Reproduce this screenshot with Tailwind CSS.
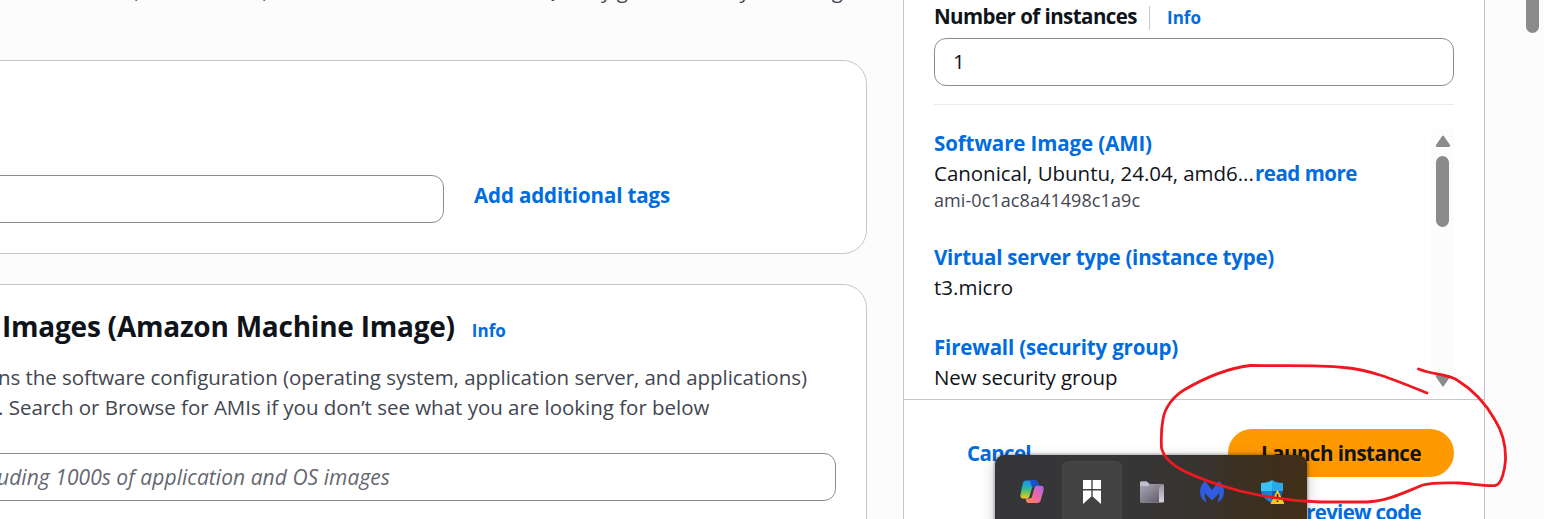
<!DOCTYPE html>
<html lang="en">
<head>
<meta charset="utf-8">
<title>Launch an instance</title>
<script src="https://cdn.jsdelivr.net/npm/@tailwindcss/browser@4"></script>
</head>
<body class="relative flex h-[519px] w-[1544px] overflow-hidden bg-[#fcfcfd] font-['Open_Sans','Noto_Sans',sans-serif] text-[20.5px] leading-[30px] text-[#0f141a]">

<!-- Main column -->
<main class="flex h-full w-[867px] shrink-0 flex-col overflow-hidden">
  <div class="flex h-[60px] shrink-0 items-start justify-end pr-[24px]">
    <p class="-mt-[25px] shrink-0 whitespace-nowrap tracking-[0.11px] text-[#424650]">Amazon EC2 allows you to create virtual machines, or instances, that run on the AWS Cloud. Quickly get started by following</p>
  </div>

  <section class="-ml-8 flex h-[194px] shrink-0 items-start rounded-[24px] border border-[#c6c6cd] bg-white pt-[114px]">
    <div class="h-12 w-[475px] rounded-[12px] border border-[#8c8c94] bg-white"></div>
    <a class="ml-[30px] mt-[5px] font-bold tracking-[-0.12px] text-[#006ce0]">Add additional tags</a>
  </section>

  <section class="-ml-8 mt-[30px] h-[300px] shrink-0 rounded-t-[24px] border border-[#c6c6cd] bg-white pl-8 pt-[23px]">
    <div class="flex h-9 items-baseline">
      <h2 class="whitespace-nowrap pl-px text-[28px] font-bold leading-9 tracking-[-0.23px]">Images (Amazon Machine Image)</h2>
      <a class="ml-[17px] text-[17px] font-bold leading-6 text-[#006ce0]">Info</a>
    </div>
    <p class="-ml-[3px] mt-[18px] whitespace-nowrap tracking-[-0.04px] text-[#424650]">ns the software configuration (operating system, application server, and applications)</p>
    <p class="-ml-[3px] whitespace-nowrap tracking-[-0.02px] text-[#424650]">. Search or Browse for AMIs if you don’t see what you are looking for below</p>
    <div class="-ml-8 mt-[31px] flex h-12 w-[867px] items-center rounded-[12px] border border-[#8c8c94] pl-[27px]">
      <span class="whitespace-nowrap text-[21px] italic tracking-[0.05px] text-[#656871]">uding 1000s of application and OS images</span>
    </div>
  </section>
</main>

<!-- Summary panel -->
<aside class="ml-9 flex h-full w-[582px] shrink-0 flex-col border-x border-[#c6c6cd] bg-white">
  <div class="flex h-[399px] shrink-0 flex-col px-[30px] pt-[2px]">
    <div class="flex h-[31px] items-center">
      <span class="w-[203px] whitespace-nowrap pb-[3px] font-bold tracking-[-0.55px]">Number of instances</span>
      <span class="ml-3 h-6 w-px bg-[#c6c6cd]"></span>
      <a class="ml-[17px] text-[17px] font-bold text-[#006ce0]">Info</a>
    </div>
    <div class="mt-[5px] flex h-12 shrink-0 items-center rounded-[12px] border border-[#8c8c94] pb-[2px] pl-[18px]">1</div>
    <div class="mt-[18px] h-px shrink-0 bg-[#ebebf0]"></div>
    <div class="flex flex-1 justify-between">
      <div class="whitespace-nowrap pt-[23px]">
        <a class="block font-bold tracking-[-0.1px] text-[#006ce0]">Software Image (AMI)</a>
        <div class="flex"><span class="w-[321px] tracking-[-0.03px]">Canonical, Ubuntu, 24.04, amd6...</span><a class="font-bold tracking-[-0.49px] text-[#006ce0]">read more</a></div>
        <div class="h-6 text-[18px] leading-6 tracking-[0.08px] text-[#424650]">ami-0c1ac8a41498c1a9c</div>
        <a class="mt-[30px] block font-bold tracking-[-0.24px] text-[#006ce0]">Virtual server type (instance type)</a>
        <div>t3.micro</div>
        <a class="mt-[30px] block font-bold tracking-[-0.17px] text-[#006ce0]">Firewall (security group)</a>
        <div class="tracking-[-0.1px]">New security group</div>
      </div>
      <div class="mt-[24px] flex h-[264px] w-[23px] flex-col items-center bg-[#fcfcfc] pb-[6px] pt-[6px]">
        <svg class="h-[12px] w-[16px]" viewBox="0 0 16 12"><path d="M7 1.200Q8-.2 9 1.200L15 10Q15.600 11.800 14 12H2Q.4 11.800 1 10Z" fill="#8b8b8b"/></svg>
        <div class="mt-[9px] h-[71px] w-[13px] rounded-full bg-[#8b8b8b]"></div>
        <svg class="mt-auto h-[12px] w-[16px]" viewBox="0 0 16 12"><path d="M7 10.800Q8 12.200 9 10.800L15 2Q15.600.2 14 0H2Q.4.2 1 2Z" fill="#8b8b8b"/></svg>
      </div>
    </div>
  </div>
  <div class="flex h-[120px] shrink-0 flex-col border-t border-[#c6c6cd] px-[30px] pt-[29px]">
    <div class="flex h-12 items-center justify-between pl-[33px]">
      <a class="font-bold tracking-[-0.64px] text-[#006ce0]">Cancel</a>
      <button class="h-12 w-[226px] rounded-full bg-[#ff9900] font-bold tracking-[-0.5px]">Launch instance</button>
    </div>
    <a class="mr-[33px] mt-[20px] self-end font-bold tracking-[-0.71px] text-[#006ce0]">Preview code</a>
  </div>
</aside>

<!-- Page scrollbar thumb -->
<div class="ml-[41px] h-[33px] w-[13px] shrink-0 rounded-b-full bg-[#8b8b8b]"></div>

<!-- System tray flyout over the page -->
<div class="absolute left-[995px] top-[455px] flex h-[72px] w-[312px] items-start rounded-t-[9px] bg-[linear-gradient(90deg,#353638_0%,#363637_45%,#37342f_65%,#3b3022_80%,#412e17_100%)] pl-[7px] pt-[6px] shadow-[0_0_3px_1px_rgba(0,0,0,0.3),0_4px_16px_rgba(0,0,0,0.2)]">
  <div class="flex h-[62px] w-[60px] items-center justify-center">
    <svg class="h-6 w-6" viewBox="0 0 24 24">
      <defs>
        <linearGradient id="ca" x1="0" y1="0" x2="0" y2="1"><stop offset="0" stop-color="#1c8fec"/><stop offset=".4" stop-color="#22b5b0"/><stop offset=".7" stop-color="#7cc552"/><stop offset="1" stop-color="#f6c724"/></linearGradient>
        <linearGradient id="cb" x1="1" y1="0" x2="0" y2="1"><stop offset="0" stop-color="#a866ee"/><stop offset=".5" stop-color="#ee66a5"/><stop offset="1" stop-color="#ff8b45"/></linearGradient>
      </defs>
      <path d="M6 .5h9.500c1.500 0 2 1 2.400 2.400l.8 3H15c-2 0-2.600.8-3.100 2.500L9.800 15.500c-.6 2-1.300 3-3.300 3H3C.7 18.500 0 16.500.6 14L2.800 3.500C3.400 1.500 4.200.5 6 .5Z" fill="url(#ca)"/>
      <path d="M10 .5h5.500c1.500 0 2 1 2.400 2.400l.8 3H15c-1.600 0-2.400.5-2.900 1.800Z" fill="#1b4fcf"/>
      <path d="M17.500 23H8.500c-1.500 0-2-1-2.400-2.400l-.6-2.100H9c2 0 2.700-.8 3.200-2.500L14 9c.6-2 1.300-3.200 3.300-3.200h3.500c2.500 0 3.300 2 2.700 4.500l-2.600 9.500c-.6 2-1.500 3.200-3.400 3.200Z" fill="url(#cb)"/>
    </svg>
  </div>
  <div class="flex h-[62px] w-[60px] items-center justify-center rounded-[6px] border border-[#474747] bg-[#434343]">
    <svg class="h-6 w-[18px]" viewBox="0 0 18 24" fill="#fff"><path d="M0 0h8.300v9H0zM9.700 0H18v9H9.700zM0 10.500h8.300v6L0 24zM9.700 10.500H18V24l-8.300-7.500z"/></svg>
  </div>
  <div class="flex h-[62px] w-[60px] items-center justify-center">
    <svg class="h-[22px] w-6" viewBox="0 0 24 22">
      <defs>
        <linearGradient id="fd" x1="0" y1="0" x2="1" y2="1"><stop offset="0" stop-color="#aaa6b3"/><stop offset="1" stop-color="#5d5966"/></linearGradient>
        <linearGradient id="fe" x1="0" y1="0" x2="0" y2="1"><stop offset="0" stop-color="#8e8a98"/><stop offset="1" stop-color="#d8d5df"/></linearGradient>
      </defs>
      <path d="M0 1.500Q0 .5 1 .5h5.500l3 2.500h13q1.500 0 1.500 1.500V20q0 1.500-1.500 1.500H1.500Q0 21.500 0 20Z" fill="url(#fe)"/>
      <path d="M0 5.500h8.500l2.500-2h11.500L19 6.500V21.500H1.500Q0 21.500 0 20Z" fill="url(#fd)"/>
      <path d="M0 1.500Q0 .5 1 .5h5.500l3 2.500-1.500 2H0Z" fill="#c3bfcc"/>
    </svg>
  </div>
  <div class="flex h-[62px] w-[60px] items-center justify-center">
    <svg class="h-6 w-6" viewBox="0 0 24 24"><path d="M5 1 12 10 19 1c3 2.500 5 6 5 10.500 0 5-2.500 9-7 11 1.700-2.500 2.500-5.500 2.300-9.500L12 20.500 4.700 13c-.2 4 .6 7 2.300 9.500-4.500-2-7-6-7-11C0 7 2 3.500 5 1Z" fill="#2f5ce0"/></svg>
  </div>
  <div class="flex h-[62px] w-[60px] items-center justify-center">
    <svg class="h-6 w-6" viewBox="0 0 24 24">
      <path d="M12 0Q16 3 23 3v8H12Z" fill="#29a9ea"/><path d="M12 0Q8 3 1 3v8h11Z" fill="#37c3f4"/>
      <path d="M1 11h11v12Q2 18.500 1 11Z" fill="#1683d8"/><path d="M12 11h11q-1 7.500-11 12Z" fill="#1263b4"/>
      <path d="M17.500 10.500 24 24H11Z" fill="#ffc720" stroke="#ffc720" stroke-linejoin="round"/><path d="M16.700 14h1.600v5h-1.600zM16.700 20.500h1.600V22h-1.600z" fill="#222"/>
    </svg>
  </div>
</div>

<!-- Hand-drawn ink circle -->
<svg class="absolute left-0 top-0 h-[519px] w-[1544px]" viewBox="0 0 1544 519" fill="none" stroke="#f01820" stroke-width="2.800" stroke-linecap="round" stroke-linejoin="round">
  <path d="M1427 393C1395 380 1372 370 1344 367.500C1318 364.500 1280 366 1250 365.500C1230 368 1206 377 1184 390C1174 396 1165 407 1163 419C1161 430 1161 438 1161.500 448C1164 458 1172 465 1184 471C1198 478 1218 485 1240 491C1265 497 1290 501 1320 502H1367C1388 501 1405 492 1423 485C1434 482 1450 483 1460 483C1474 484 1484 486 1495 485.500C1502 485 1505 468 1505.500 460C1506 443 1502 431 1495 420C1485 402 1470 388 1457 380C1447 374 1434 375 1418.500 369"/>
</svg>
</body>
</html>
